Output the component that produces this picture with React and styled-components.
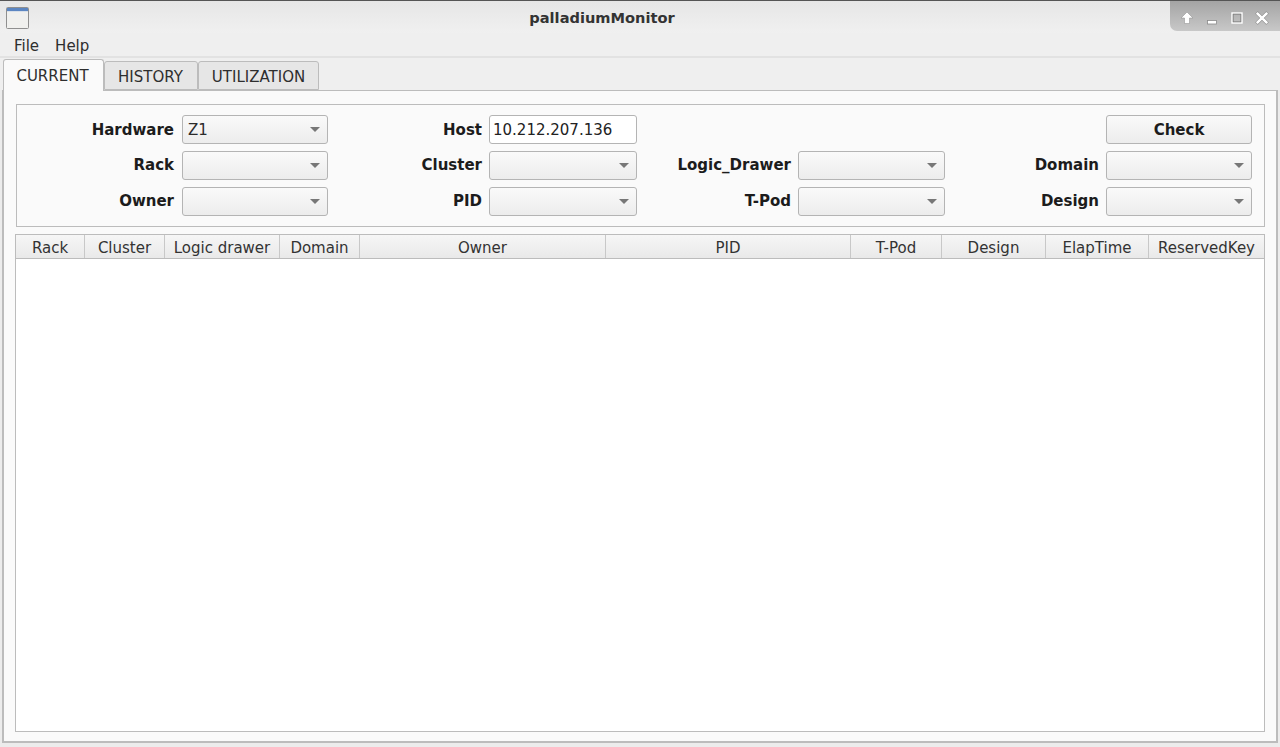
import React from "react";
import styled, { createGlobalStyle } from "styled-components";

const Global = createGlobalStyle`
  html, body { margin: 0; padding: 0; height: 747px; overflow: hidden; background: #ececec; }
  #root { height: 747px; }
  * { box-sizing: border-box; }
`;

const Win = styled.div`
  width: 1280px; height: 747px; display: flex; flex-direction: column;
  font-family: "DejaVu Sans", sans-serif; font-size: 15px; color: #2b2b2b;
  background: #ececec; border-top: 1px solid #555; position: relative;
`;
const TitleBar = styled.div`
  height: 32px; display: grid; grid-template-columns: 1170px 110px;
  background: linear-gradient(#e6e6e6, #f0f0f0);
  flex: none; position: relative;
`;
const TitleLeft = styled.div`display: flex; align-items: flex-start; padding: 6px 0 0 6px;`;
const Title = styled.div`
  position: absolute; left: 0; right: 76px; top: 1px; height: 32px; line-height: 32px; text-align: center;
  font-weight: 700; font-size: 14.6px; color: #333;
`;
const WmButtons = styled.div`
  height: 30px; position: relative; z-index: 1;
  background: linear-gradient(#a4a4a4, #c8c8c8);
  border-bottom-left-radius: 7px;
  display: flex; align-items: center; padding: 3px 0 0 9px; gap: 9px;
`;
const MenuBar = styled.div`
  height: 25px; flex: none; display: flex; align-items: center; padding: 2px 0 0 14px; gap: 16px;
  background: #efefef; border-bottom: 2px solid #e2e2e2;
`;
const MenuItem = styled.span`color: #2e2e2e;`;
const TabBar = styled.div`
  height: 32px; flex: none; display: flex; align-items: flex-end; padding-left: 3px; background: #efefef;
  position: relative; z-index: 2;
`;
const Tab = styled.div`
  height: ${p => (p.$active ? "32px" : "29px")};
  width: ${p => p.$w}px;
  margin-bottom: ${p => (p.$active ? "-1px" : "0")};
  display: flex; align-items: center; justify-content: center;
  background: ${p => (p.$active ? "#fafafa" : "#e6e6e6")};
  border: 1px solid #bcbcbc;
  border-bottom: ${p => (p.$active ? "none" : "1px solid #bcbcbc")};
  border-radius: 3px 3px 0 0;
  padding: ${p => p.$pad};
  color: #2e2e2e;
`;
const Pane = styled.div`
  margin: 0 2px 0 2px; height: 653px; flex: none; background: #fafafa;
  border: 2px solid #bcbcbc; border-width: 1px 2px 2px 2px;
  padding: 13px 11px 0 12px; display: flex; flex-direction: column; gap: 7px;
`;
const Filter = styled.div`
  height: 123px; flex: none; border: 1px solid #bcbcbc;
  display: grid; align-content: start; padding-top: 10px; row-gap: 7px;
  grid-template-columns: 165px 146px 161px 148px 161px 147px 161px 146px;
  grid-auto-rows: 29px; background: #fafafa;
`;
const Label = styled.label`
  font-weight: 700; color: #1c1c1c; text-align: right; padding: 0 7px 0 0; line-height: 28px; white-space: nowrap;
  &:nth-child(8n + 1) { padding-right: 8px; }
  &:nth-child(-n + 4) { padding-top: 1px; }
`;
const Combo = styled.div`
  height: 29px; border: 1px solid #b4b4b4; border-radius: 3px;
  background: linear-gradient(#fafafa, #ececec);
  display: flex; align-items: center; justify-content: space-between; padding: 0 7px 0 5px;
  color: #2b2b2b;
`;
const Arrow = styled.span`
  width: 0; height: 0; border-left: 5px solid transparent; border-right: 5px solid transparent;
  border-top: 5px solid #777;
  margin-bottom: 1px;
`;
const Input = styled.div`
  height: 29px; border: 1px solid #b4b4b4; border-radius: 3px; background: #fff;
  display: flex; align-items: center; padding: 0 3px; color: #222;
`;
const Button = styled.div`
  height: 29px; border: 1px solid #b4b4b4; border-radius: 3px;
  background: linear-gradient(#fafafa, #ececec);
  display: flex; align-items: center; justify-content: center; font-weight: 700; color: #1c1c1c;
`;
const Empty = styled.div``;
const Table = styled.div`
  margin: 0 0 0 -1px; height: 498px; flex: none; background: #fff; border: 1px solid #bcbcbc;
  display: flex; flex-direction: column;
`;
const Header = styled.div`
  height: 24px; flex: none; display: flex;
  background: linear-gradient(#f6f6f6, #e9e9e9); border-bottom: 1px solid #bcbcbc;
`;
const Col = styled.div`
  width: ${p => p.$w}px; flex: none; text-align: center; padding-top: 1px; line-height: 24px; height: 23px; color: #333;
  border-right: 1px solid #c8c8c8; white-space: nowrap;
  &:last-child { border-right: none; }
`;

const WinIcon = () => (
  <svg width="23" height="22" viewBox="0 0 23 22">
    <rect x="0.5" y="0.5" width="22" height="21" rx="1" fill="#f0f0ee" stroke="#8f8f8f" />
    <rect x="1" y="1" width="21" height="3" fill="#5c86c2" />
    <rect x="1" y="4" width="21" height="1" fill="#d8dfe8" />
  </svg>
);
const Up = () => (
  <svg width="16" height="16" viewBox="0 0 16 16"><path d="M8 2 14 8H10.5V13.5H5.5V8H2Z" fill="#fff" stroke="#8a8a8a" strokeWidth="0.5" /></svg>
);
const Min = () => (
  <svg width="16" height="16" viewBox="0 0 16 16"><rect x="3.5" y="10.5" width="9" height="3.5" fill="#fff" stroke="#8a8a8a" strokeWidth="0.8" /></svg>
);
const Max = () => (
  <svg width="16" height="16" viewBox="0 0 16 16" fill="none"><rect x="3" y="3" width="10" height="10" stroke="#fff" strokeWidth="1.4" /><rect x="4.2" y="4.2" width="7.6" height="7.6" stroke="#7f7f7f" strokeWidth="0.8" /></svg>
);
const Close = () => (
  <svg width="16" height="16" viewBox="0 0 16 16"><path d="M2.5 2.5 13.5 13.5M13.5 2.5 2.5 13.5" stroke="#8a8a8a" strokeWidth="3.6" /><path d="M2.8 2.8 13.2 13.2M13.2 2.8 2.8 13.2" stroke="#fff" strokeWidth="2.6" /></svg>
);

const columns = [
  ["Rack", 69], ["Cluster", 80], ["Logic drawer", 115], ["Domain", 80], ["Owner", 246],
  ["PID", 245], ["T-Pod", 91], ["Design", 104], ["ElapTime", 103], ["ReservedKey", 115],
];

const C = ({ v }) => <Combo><span>{v}</span><Arrow /></Combo>;

export default function App() {
  return (
    <Win>
      <Global />
      <TitleBar>
        <Title>palladiumMonitor</Title>
        <TitleLeft><WinIcon /></TitleLeft>
        <WmButtons><Up /><Min /><Max /><Close /></WmButtons>
      </TitleBar>
      <MenuBar><MenuItem>File</MenuItem><MenuItem>Help</MenuItem></MenuBar>
      <TabBar>
        <Tab $active $w={101} $pad="0 2px 0 0">CURRENT</Tab>
        <Tab $w={94} $pad="2px 1px 0 0">HISTORY</Tab>
        <Tab $w={121} $pad="2px 0 0 0">UTILIZATION</Tab>
      </TabBar>
      <Pane>
        <Filter>
          <Label>Hardware</Label><C v="Z1" />
          <Label>Host</Label><Input>10.212.207.136</Input>
          <Empty /><Empty />
          <Empty /><Button>Check</Button>
          <Label>Rack</Label><C />
          <Label>Cluster</Label><C />
          <Label>Logic_Drawer</Label><C />
          <Label>Domain</Label><C />
          <Label>Owner</Label><C />
          <Label>PID</Label><C />
          <Label>T-Pod</Label><C />
          <Label>Design</Label><C />
        </Filter>
        <Table>
          <Header>
            {columns.map(([n, w]) => <Col key={n} $w={w}>{n}</Col>)}
          </Header>
        </Table>
      </Pane>
    </Win>
  );
}
